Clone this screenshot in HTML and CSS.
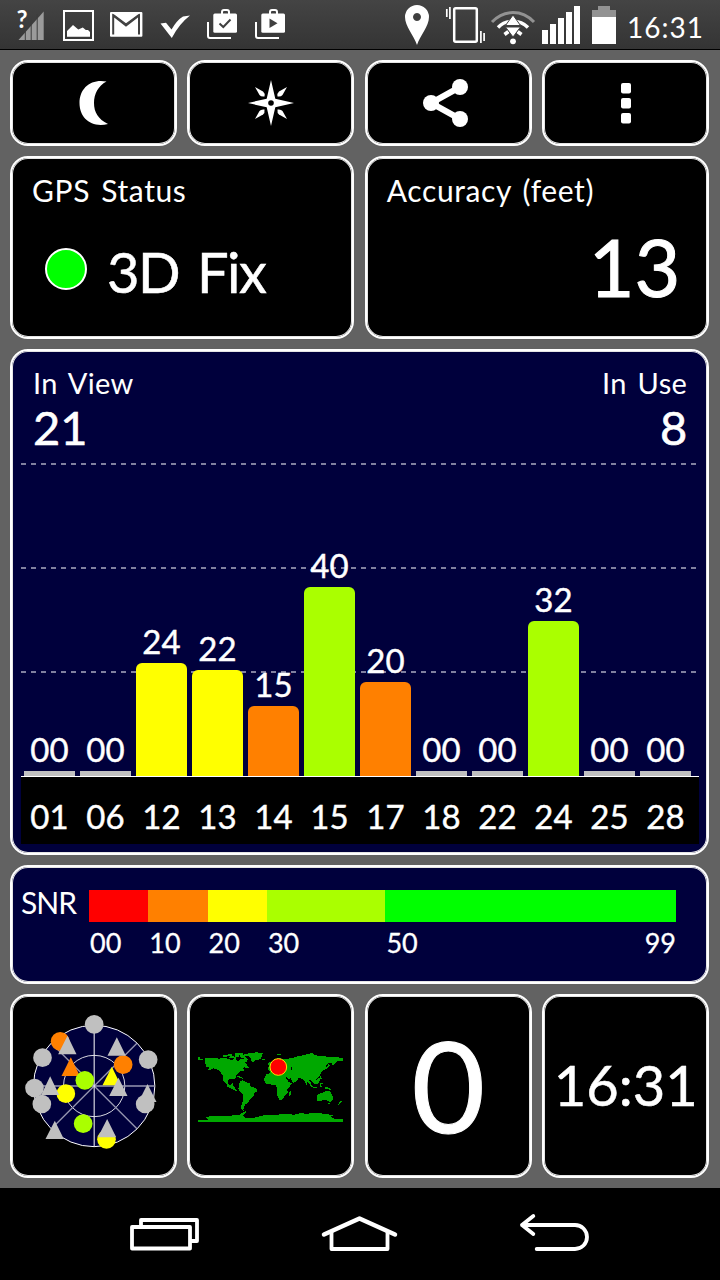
FILE: index.html
```html
<!DOCTYPE html>
<html lang="en">
<head>
    <meta charset="UTF-8">
    <meta name="viewport" content="width=device-width, initial-scale=1.0">
    <title>GPS Status</title>
    <link rel="stylesheet" href="styles.css">
</head>
<body>
    <header class="status-bar">
        <div class="status-left">
            <svg width="32" height="49" viewBox="0 0 32 49">
                <path fill="#9b9b9b" d="M3.5 40L28.7 40V11.5z"/>
                <path stroke="#3c3c3c" d="M10.3 20V40M16.2 20V40M22.2 14V40"/>
                <text class="unknown" x="1.5" y="27.5">?</text>
            </svg>
            <svg width="32" height="49" viewBox="0 0 32 49">
                <rect x="1" y="11" width="29" height="29" fill="none" stroke="#fff" stroke-width="2"/>
                <path fill="#fff" d="M4 36.7V31l6-6 5.3 4.5 4.5-2 3 2.5h2.2l2 2v4.7z"/>
            </svg>
            <svg width="32" height="49" viewBox="0 0 32 49">
                <rect x="-1" y="12" width="32.4" height="24.7" rx="1" fill="#fff"/>
                <path fill="none" stroke="#404040" stroke-width="2" d="M2.2 34.5V15.5L15 25.5 28 15.5V34.5"/>
                <path fill="none" stroke="#404040" stroke-width="1.2" d="M2.2 14.5L15 24 28 14.5"/>
            </svg>
            <svg width="32" height="49" viewBox="0 0 32 49">
                <path fill="#fff" d="M1.5 23.5L7 22.7 12.5 29.5Q18 20 24 16.5L31 15.5Q20 24 12.8 38z"/>
            </svg>
            <svg width="32" height="49" viewBox="0 0 32 49">
                <path fill="none" stroke="#fff" stroke-width="2" d="M1 22V36Q1 38 3 38H24M15 14V12Q15 10 17 10H20Q22 10 22 12V14"/>
                <rect x="6.3" y="13.5" width="23.7" height="19.2" rx="1.5" fill="#fff"/>
                <path fill="none" stroke="#404040" stroke-width="2" d="M12.5 23.5L16.3 27 23.5 19.5"/>
            </svg>
            <svg width="32" height="49" viewBox="0 0 32 49">
                <path fill="none" stroke="#fff" stroke-width="2" d="M1 22V36Q1 38 3 38H24M15 14V12Q15 10 17 10H20Q22 10 22 12V14"/>
                <rect x="6.3" y="13.5" width="23.7" height="19.2" rx="1.5" fill="#fff"/>
                <path fill="#404040" d="M14.5 18.5V28L22.5 23.2z"/>
            </svg>
        </div>
        <div class="status-right">
            <svg width="35" height="49" viewBox="0 0 35 49">
                <path fill="#fff" fill-rule="evenodd" d="M12 45C9 36 0 26 0 17a12 12 0 0 1 24 0C24 26 15 36 12 45zM12 13a4 4 0 1 0 .01 0z"/>
            </svg>
            <svg width="39" height="49" viewBox="0 0 39 49">
                <rect x="8.2" y="8.2" width="22.6" height="33.6" rx="1.5" fill="none" stroke="#fff" stroke-width="2.5"/>
                <path stroke="#fff" stroke-width="1.7" d="M.8 9V17M3.9 7V19M34.9 31V43M38.1 33V41"/>
            </svg>
            <svg width="45" height="49" viewBox="0 0 45 49">
                <path fill="none" stroke="#929292" stroke-width="3" d="M1 22Q10 12.5 22 12.5T43 22"/>
                <path fill="none" stroke="#fff" stroke-width="3.4" d="M7 27.5Q13 21.2 22 21.2T37 27.5"/>
                <path fill="none" stroke="#fff" stroke-width="3.6" d="M13.5 34.5L17.5 31.5M30.5 34.5L26.5 31.5"/>
                <path fill="#fff" stroke="#404040" d="M22 15L14.5 25.5H29.5zM14.5 27H29.5L22 37z"/>
                <circle cx="22" cy="41.3" r="2.9" fill="#fff"/>
            </svg>
            <svg width="44" height="49" viewBox="0 0 44 49">
                <path fill="#fff" d="M0 30h6v14H0zM8 24h6v20H8zM16 18h6v26h-6zM24 12h6v32h-6zM32 6h6v38h-6z"/>
            </svg>
            <svg width="24" height="49" viewBox="0 0 24 49">
                <path fill="#929292" d="M6 6H18V10H24V17H0V10H6z"/>
                <path fill="#fff" d="M0 17H24V44H0z"/>
            </svg>
            <span class="clock">16:31</span>
        </div>
    </header>

    <main class="dashboard">
        <button class="card tool">
            <svg width="48" height="48" viewBox="0 0 48 48">
                <path fill="#fff" d="M36.5 2.5C21-.5 9.5 9 9.5 24S21 49 38 45C28 40 24 33 24 24S28 7 36.5 2.5z"/>
            </svg>
        </button>
        <button class="card tool">
            <svg width="48" height="48" viewBox="0 0 48 48">
                <path fill="#fff" d="M24 1L28.3 19.7 47 24 28.3 28.3 24 47 19.7 28.3 1 24 19.7 19.7z"/>
                <g fill="#fff">
                    <path id="dart" d="M8 8L16 12.5Q18 14 17.5 17.5 14 18 12.5 16z"/>
                    <use href="#dart" transform="rotate(90 24 24)"/>
                    <use href="#dart" transform="rotate(180 24 24)"/>
                    <use href="#dart" transform="rotate(270 24 24)"/>
                </g>
                <circle cx="24" cy="24" r="2.8"/>
            </svg>
        </button>
        <button class="card tool">
            <svg width="48" height="48" viewBox="0 0 48 48">
                <path fill="none" stroke="#fff" stroke-width="6" d="M36 8L7 24 36 40"/>
                <g fill="#fff">
                    <circle cx="36" cy="8" r="8"/>
                    <circle cx="7" cy="24" r="8"/>
                    <circle cx="36" cy="40" r="8"/>
                </g>
            </svg>
        </button>
        <button class="card tool">
            <svg width="48" height="48" viewBox="0 0 48 48">
                <g fill="#fff">
                    <rect x="19" y="4" width="10" height="10.5" rx="2"/>
                    <rect x="19" y="19" width="10" height="10.5" rx="2"/>
                    <rect x="19" y="34" width="10" height="10.5" rx="2"/>
                </g>
            </svg>
        </button>

        <section class="card info">
            <div class="label">GPS Status</div>
            <div class="fix"><span class="led"></span><span class="fix-text">3D Fix</span></div>
        </section>
        <section class="card info">
            <div class="label">Accuracy (feet)</div>
            <div class="accuracy">13</div>
        </section>

        <section class="card chart">
            <div class="chart-head">
                <div>
                    <div class="label">In View</div>
                    <div class="count">21</div>
                </div>
                <div class="right">
                    <div class="label">In Use</div>
                    <div class="count">8</div>
                </div>
            </div>
            <div class="plot">
                <div class="sat"><span>00</span><i class="bar none"></i></div>
                <div class="sat"><span>00</span><i class="bar none"></i></div>
                <div class="sat"><span>24</span><i class="bar yellow" style="height: 113px"></i></div>
                <div class="sat"><span>22</span><i class="bar yellow" style="height: 106px"></i></div>
                <div class="sat"><span>15</span><i class="bar orange" style="height: 70px"></i></div>
                <div class="sat"><span>40</span><i class="bar lime" style="height: 189px"></i></div>
                <div class="sat"><span>20</span><i class="bar orange" style="height: 94px"></i></div>
                <div class="sat"><span>00</span><i class="bar none"></i></div>
                <div class="sat"><span>00</span><i class="bar none"></i></div>
                <div class="sat"><span>32</span><i class="bar lime" style="height: 155px"></i></div>
                <div class="sat"><span>00</span><i class="bar none"></i></div>
                <div class="sat"><span>00</span><i class="bar none"></i></div>
            </div>
            <div class="prns">
                <span>01</span><span>06</span><span>12</span><span>13</span>
                <span>14</span><span>15</span><span>17</span><span>18</span>
                <span>22</span><span>24</span><span>25</span><span>28</span>
            </div>
        </section>

        <section class="card snr">
            <div class="snr-title">SNR</div>
            <div class="scale">
                <div class="step"><i class="red"></i><span>00</span></div>
                <div class="step"><i class="orange"></i><span>10</span></div>
                <div class="step"><i class="yellow"></i><span>20</span></div>
                <div class="step"><i class="lime"></i><span>30</span></div>
                <div class="step last"><i class="green"></i><span>50</span><span>99</span></div>
            </div>
        </section>

        <section class="card tile">
            <svg width="144" height="144" viewBox="34.5 72 432 432">
                <circle cx="251" cy="288" r="182" fill="#00003c" stroke="#fff" stroke-width="3"/>
                <circle cx="251" cy="288" r="92" fill="none" stroke="#d8d8e0" stroke-width="3"/>
                <path stroke="#9696b0" stroke-width="4" d="M69 288H433M122 159L380 417M380 159L122 417"/>
                <path stroke="#fff" stroke-width="3" d="M251 106V470"/>
                <g fill="#c0c0c0">
                    <circle cx="251" cy="103" r="28"/>
                    <circle cx="96" cy="203" r="28"/>
                    <circle cx="413" cy="209" r="28"/>
                    <circle cx="72" cy="294" r="28"/>
                    <circle cx="94" cy="342" r="28"/>
                </g>
                <circle cx="149" cy="154" r="28" fill="#ff8000"/>
                <circle cx="338" cy="224" r="28" fill="#ff8000"/>
                <circle cx="166" cy="311" r="28" fill="#ff0"/>
                <circle cx="288" cy="448" r="28" fill="#ff0"/>
                <path fill="#ff8000" d="M181 202L208 258H153z"/>
                <circle cx="223" cy="271" r="28" fill="#af0"/>
                <circle cx="218" cy="401" r="28" fill="#af0"/>
                <path fill="#ff0" d="M304 230L331 286H276z"/>
                <g fill="#c0c0c0">
                    <path d="M171 137L198 193H143zM319 142L346 197H291zM119 259L146 315H92zM324 263L351 318H296zM411 282L438 336H384zM133 392L160 447H105zM290 387L317 442H262z"/>
                    <circle cx="404" cy="342" r="28"/>
                </g>
            </svg>
        </section>
        <section class="card tile">
            <svg width="146" height="72" viewBox="38 180 438 216" shape-rendering="crispEdges">
                <g fill="#00a800">
                    <!-- north and central america -->
                    <path d="M39 201h4v5h10v3H39zM57 206l16-3 30 3 14-3 14 5 12 2 3-8 8-1-3 9 9 4 5-8 9 2 8 13 9 12-3 3-12-4-5 2 6 7-14 4-9 10-3 9-5 3 1 7-3-7-14 1-3 13 8 4 5-6h4l-2 8 5 2 3 8 7 3-3 4-11-6-17-8-3-8-9-10-2-15-5-9-5-7-18-6-16 7-3-2 9-6-12-5z"/>
                    <path d="M113 195h14v-2h12v5h-13v3h-13zM133 199h14v6h-16zM148 190h26v4h-14v8h-12zM164 196h11l12 12-2 9-13-6 3-6-9-3zM152 257l14 3 10 5-4 1-14-4z"/>
                    <!-- greenland -->
                    <path d="M174 194l18-5 22-2 18 2-2 7-3 11-16 4-8 7-6-8-3-10-18-3z"/>
                    <path d="M231 207h9v4h-9zM274 191h12v3h-12z"/>
                    <!-- south america -->
                    <path d="M163 275l8-4 10 5 12 4 3 9 20 8-2 8-7 5-3 10-9 7-8 12-8 5-3 8-2 8 5 4-9-3-3-11 5-14 1-22-9-9-5-9 3-10z"/>
                    <!-- africa -->
                    <path d="M244 252l22-5 2 5 15 4 18 1 9 20 10 1-6 11-8 8 1 13-9 8-5 10-11 3-7-18 1-15-5-13-17-2-11-1-7-10 2-9zM312 306l6-4-2 12-6 5z"/>
                    <!-- europe and asia -->
                    <path d="M246 233l6-3-4-8 4-7 8 5 6-11 15-5 14 4 14-1 7-3 13-2 8-4 17-2 15-5 12-1 10 6 21 2 20 3 25 1 15 3v7l-15 2-8 6-7 7-2-8-11-1-8 9 1 8-9 7-7 7-2 9-8 5-5 7-3 13-8-7-7-7-5 3-5 13-7-14-9-6-7-1-4 8-13 7-9-17-2 8-16-5-4-6-5 2-10-9-8 7-9 2-3-9z"/>
                    <path d="M425 229l5-7 3 5-10 10-10 5 1-3zM369 268l7 10 5 11-3 1-10-13zM389 272l13-9 2 8-5 9-8 3zM379 289l16 3v3l-15-3zM404 278h8v4h-5l2 8h-5zM403 258h4l3 11-5-3zM419 290l15 5 4 7-12-5-9-2z"/>
                    <!-- australia and new zealand -->
                    <path d="M396 315l14-7 8-2 5-4 7 2 3-2 5 10 5 8-1 9-8 7-11-5-10-1-11 4-7-3zM428 340h6v3h-6zM467 332l3 4-8 6-3 3 2-6z"/>
                    <!-- antarctica -->
                    <path d="M39 390h30l-7-9 22-4 28 1 24-1 26-3 18-10 4 1-12 12 9 7 25-1 21-5 20-4 27 1 17-4 35 3 18-4 21 1 32-3 23 4 25 3-9 5 13 8h25v7H39z"/>
                </g>
                <path d="M316 233l4-2v11l-4-2zM301 258l8 9 9 7-4 2-10-8z"/>
                <circle cx="279" cy="231" r="25" fill="red" stroke="#ffe000" stroke-width="3" shape-rendering="auto"/>
            </svg>
        </section>
        <section class="card tile speed">0</section>
        <section class="card tile time">16:31</section>
    </main>

    <nav class="nav-bar">
        <svg width="80" height="40" viewBox="0 0 80 40">
            <path d="M7 15H65V36.5H7zM16 15V8H72V29H65"/>
        </svg>
        <svg width="80" height="40" viewBox="0 0 80 40">
            <path stroke-width="4.5" d="M4 22.5L39.5 6.5 75 22.5"/>
            <path d="M11.5 20V37H67.5V20"/>
        </svg>
        <svg width="80" height="40" viewBox="0 0 80 40">
            <path d="M22.7 37H61A12 12 0 0 0 61 13H8M19.3 4L8 13 19.3 22"/>
        </svg>
    </nav>
</body>
</html>
```
FILE: styles.css
```css
:root {
    --navy: #00003c;
    --orange: #ff8000;
    --lime: #aaff00;
}

* {
    box-sizing: border-box;
}

body {
    margin: 0;
    width: 720px;
    height: 1280px;
    overflow: hidden;
    background: #626262;
    font-family: 'Lato', 'Liberation Sans', sans-serif;
    color: #fff;
}

svg {
    display: block;
    overflow: visible;
    flex: none;
}

/* android status bar */
.status-bar {
    display: flex;
    height: 50px;
    padding-left: 15px;
    background: linear-gradient(#444, #343434);
    border-bottom: 1px solid #000;
}

.status-left {
    display: flex;
    gap: 16px;
}

.status-right {
    display: flex;
    gap: 6px;
    margin-left: 118px;
}

.unknown {
    font-size: 24px;
    font-weight: bold;
    fill: #fff;
}

.clock {
    margin-left: 5px;
    font-size: 28px;
    line-height: 54px;
    letter-spacing: 1px;
}

.dashboard {
    display: grid;
    grid-template-columns: repeat(4, 1fr);
    grid-template-rows: 86px 183px 506px 119px 184px;
    gap: 10px 10.4px;
    padding: 10px 10.7px 10px 10px;
}

.card {
    border: 2px solid #fff;
    border-radius: 18px;
    background: #000;
    box-shadow: inset 0 0 0 1px #e4e4e4;
    color: #fff;
}

.tool,
.tile {
    display: flex;
    align-items: center;
    justify-content: center;
    padding: 0;
}

.label {
    font-size: 30px;
    line-height: 36px;
    letter-spacing: 0.4px;
    word-spacing: 3px;
}

/* fix + accuracy */
.info {
    grid-column: span 2;
    padding: 14px 20px;
}

.info .label {
    letter-spacing: 0.6px;
}

.fix {
    display: flex;
    align-items: center;
    gap: 20px;
    padding: 29px 0 0 13px;
}

.led {
    width: 42px;
    height: 42px;
    border: 2px solid #fff;
    border-radius: 50%;
    background: #0f0;
    margin-bottom: 6px;
}

.fix-text {
    font-size: 56px;
    line-height: 70px;
    letter-spacing: -1.5px;
    word-spacing: 5px;
    -webkit-text-stroke: 0.5px #fff;
}

.accuracy {
    font-size: 79px;
    line-height: 94px;
    margin-top: 12px;
    padding-right: 7px;
    text-align: right;
    -webkit-text-stroke: 1px #fff;
}

/* satellites chart */
.chart {
    grid-column: span 4;
    padding: 0 9px;
    background: var(--navy);
}

.chart-head {
    display: flex;
    justify-content: space-between;
    height: 112px;
    padding: 14px 11px 0 12px;
}

.chart-head .label {
    font-size: 29px;
}

.right {
    text-align: right;
}

.count {
    font-size: 47px;
    line-height: 52px;
    -webkit-text-stroke: 0.6px #fff;
}

.plot {
    --dash: repeating-linear-gradient(90deg, #8080a0 0 5px, transparent 5px 10px);
    display: flex;
    gap: 5px;
    align-items: flex-end;
    width: 678px;
    height: 313px;
    padding-left: 3px;
    background: var(--dash) 0 0 / 100% 2px no-repeat,
                var(--dash) 0 104px / 100% 2px no-repeat,
                var(--dash) 0 208px / 100% 2px no-repeat;
}

.sat {
    width: 51px;
    text-align: center;
    font-size: 33px;
    line-height: 44px;
    -webkit-text-stroke: 0.4px #fff;
}

.bar {
    display: block;
    border-radius: 6px 6px 0 0;
}

.none {
    height: 5px;
    border-radius: 0;
    background: #c0c0c0;
}

.red { background: #f00; }
.orange { background: var(--orange); }
.yellow { background: #ff0; }
.lime { background: var(--lime); }
.green { background: #0f0; }

.prns {
    display: flex;
    gap: 5px;
    width: 678px;
    height: 68px;
    padding-left: 3px;
    border-top: 1px solid #fff;
    background: #000;
    font-size: 33px;
    line-height: 78px;
    -webkit-text-stroke: 0.4px #fff;
}

.prns span {
    width: 51px;
    text-align: center;
}

/* colour scale */
.snr {
    grid-column: span 4;
    display: flex;
    padding: 23px 0 0 9px;
    background: var(--navy);
}

.snr-title {
    width: 68px;
    font-size: 30px;
    line-height: 25px;
    letter-spacing: -1px;
}

.scale {
    display: grid;
    grid-template-columns: 10fr 10fr 10fr 20fr 49fr;
    width: 587px;
}

.step {
    font-size: 27px;
    line-height: 42px;
    -webkit-text-stroke: 0.3px #fff;
}

.step span {
    padding-left: 1px;
}

.step i {
    display: block;
    height: 32px;
}

.last {
    display: grid;
    grid-template-columns: 1fr auto;
    align-content: start;
}

.last i {
    grid-column: span 2;
}

.speed {
    padding-bottom: 4px;
    font-size: 127px;
    -webkit-text-stroke: 1px #fff;
}

.time {
    padding-bottom: 3px;
    font-size: 56px;
    -webkit-text-stroke: 0.5px #fff;
}

/* android navigation */
.nav-bar {
    display: flex;
    justify-content: center;
    gap: 114.5px;
    height: 92px;
    padding: 24px 1px 0 0;
    background: #000;
}

.nav-bar svg {
    fill: none;
    stroke: #fff;
    stroke-width: 3.8px;
    stroke-linecap: round;
    stroke-linejoin: round;
}
```
